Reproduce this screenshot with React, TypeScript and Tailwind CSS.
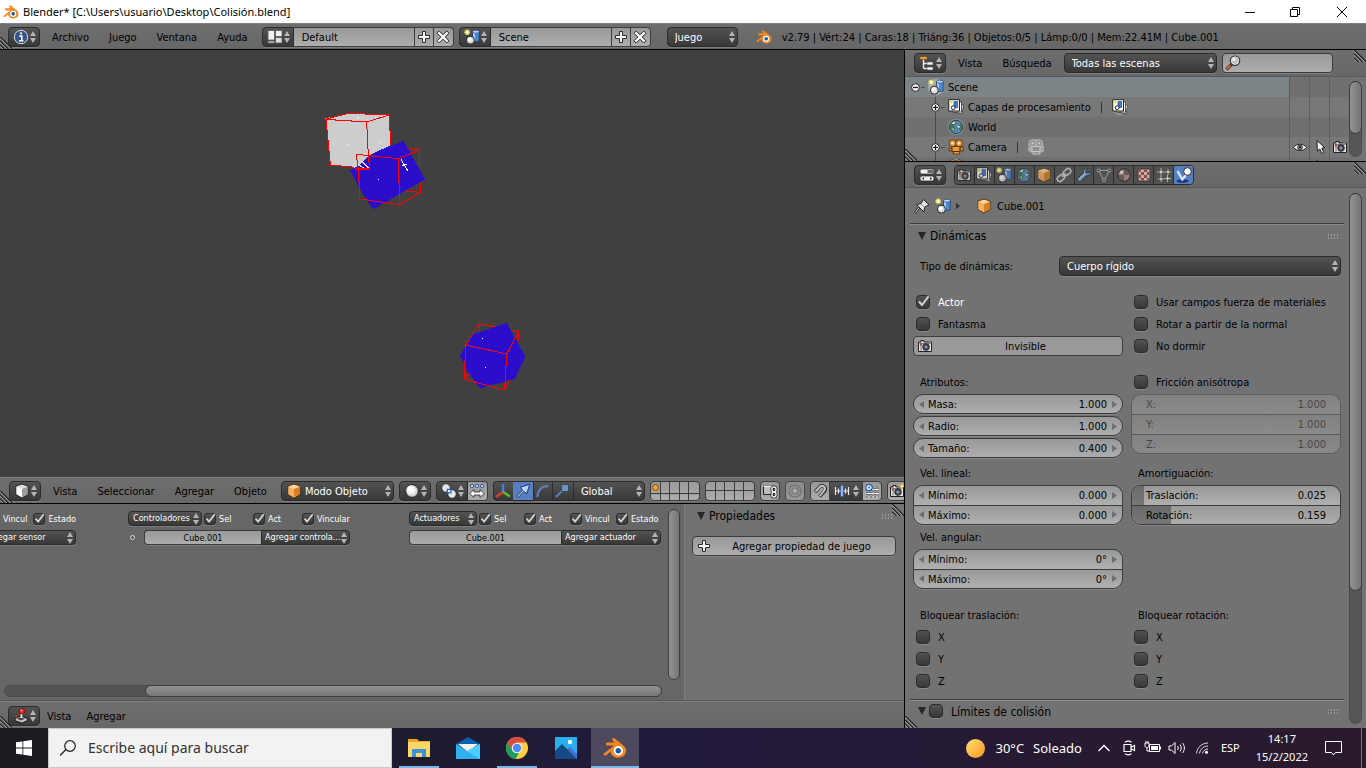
import React from 'react'

type IconProps = { children: React.ReactNode; className?: string; box?: string }

const Icon = ({ children, className = 'w-4 h-4', box = '0 0 16 16' }: IconProps) => (
  <svg viewBox={box} className={`${className} shrink-0`} fill="none" aria-hidden="true">{children}</svg>
)

// shared surfaces
const dark = 'bg-linear-to-b from-[#535353] to-[#383838] border border-[#2b2b2b] text-white shadow-[0_1px_0_#ffffff26]'
const light = 'bg-linear-to-b from-[#999999] to-[#adadad] border border-[#3c3c3c] text-black shadow-[0_1px_0_#ffffff26]'
const bar = 'bg-linear-to-b from-[#6e6e6e] to-[#676767]'

/* ---------- icons ---------- */

const BlenderLogo = ({ className }: { className?: string }) => (
  <Icon className={className} box="0 0 24 24">
    <path d="M1 17.5 11 9.6H4.4a1.6 1.6 0 0 1 0-3.2h7.4L9.6 4.6a1.5 1.5 0 0 1 1.9-2.3l8.9 7.1c2 1.7 3 3.7 2.7 6.2-.5 3.700-3.800 6.100-7.800 6.100-4.300 0-7.600-2.600-7.800-6.300L3.400 19.200c-1.600 1.200-3.800-.4-2.400-1.700z" fill="#f5861f" />
    <circle cx="15.3" cy="14.8" r="4.7" fill="#fff" />
    <circle cx="15.3" cy="14.8" r="2.7" fill="#1d5796" />
  </Icon>
)

const InfoIcon = () => (
  <Icon>
    <circle cx="8" cy="8" r="6.7" fill="#3b5488" stroke="#d5dbe6" />
    <path d="M6.2 7h2.6v4.5M6 11.8h4.4" stroke="#fff" strokeWidth="1.6" />
    <circle cx="8" cy="4.3" r="1.1" fill="#fff" />
  </Icon>
)

const LayoutIcon = () => (
  <Icon>
    <path d="M1 1.500h6.500v9.500H1z" fill="#f2f2f2" stroke="#555" strokeWidth=".8" />
    <path d="M8.500 1.500H15v6H8.500z" fill="#f2f2f2" stroke="#555" strokeWidth=".8" />
    <path d="M8.500 8.500H15v5.500H8.500zM1 12h6.500v2H1z" fill="#dedede" stroke="#555" strokeWidth=".8" />
  </Icon>
)

const SceneIcon = () => (
  <Icon>
    <path d="M8.500 2.500v9c1 1.300 5.600 1.300 6.700 0v-9z" fill="#4a86d2" stroke="#16365f" strokeWidth=".7" />
    <path d="M10 4v7.500" stroke="#c8e2ff" strokeWidth="1.500" />
    <ellipse cx="11.900" cy="2.700" rx="3.300" ry="1.500" fill="#b7d6fa" stroke="#16365f" strokeWidth=".6" />
    <circle cx="6.400" cy="11.200" r="4" fill="#d8d8d8" stroke="#222" />
    <circle cx="5.600" cy="10.200" r="2" fill="#fff" />
    <circle cx="3.200" cy="3.200" r="2.500" fill="#f6f29a" stroke="#c2ba3a" strokeWidth=".8" />
    <circle cx="3.200" cy="3.200" r="1" fill="#fff" />
  </Icon>
)

const PlusIcon = () => (
  <Icon><path d="M6.500 2.500h3v4h4v3h-4v4h-3v-4h-4v-3h4z" fill="#f5f5f5" stroke="#2b2b2b" /></Icon>
)

const CrossIcon = () => (
  <Icon>
    <path d="m4.200 2 3.800 3.800L11.800 2 14 4.200 10.200 8l3.800 3.800-2.200 2.200L8 10.200 4.200 14 2 11.800 5.800 8 2 4.200z" fill="#f5f5f5" stroke="#2b2b2b" />
  </Icon>
)

const TreeIcon = () => (
  <Icon>
    <path d="M4.500 4v9.500M4.500 8.500H8M4.500 13.500H8" stroke="#f0f0f0" strokeWidth="1.400" />
    <path d="M1 1.500h7v3H1z" fill="#e8a050" stroke="#6a3c08" strokeWidth=".6" />
    <path d="M8 7h6v3H8zM8 12h6v3H8z" fill="#f4f4f4" stroke="#555" strokeWidth=".6" />
  </Icon>
)

const PropsIcon = () => (
  <Icon>
    <rect x="1" y="2" width="14" height="5" rx="2" fill="#eee" stroke="#222" strokeWidth=".7" />
    <path d="M8.500 3h4.500a1.500 1.500 0 0 1 0 3H8.500z" fill="#666" />
    <rect x="1" y="9" width="14" height="5" rx="2" fill="#eee" stroke="#222" strokeWidth=".7" />
    <path d="m5 10-2 1.500L5 13zM11 10l2 1.500-2 1.500z" fill="#333" />
  </Icon>
)

const LayersIcon = () => (
  <Icon>
    <path d="m6 13 8 2 1.500-9-3-.6z" fill="#ececec" stroke="#333" strokeWidth=".8" />
    <path d="M4 13h9.500V3h-2z" fill="#fff" stroke="#333" strokeWidth=".8" />
    <path d="M.7.700h10.800v11.300H.7z" fill="#f8f8f8" stroke="#222" />
    <path d="M6 2.500h3.500v6H6z" fill="#3f79c9" stroke="#1d3d6b" strokeWidth=".6" />
    <circle cx="5.200" cy="8.700" r="1.900" fill="#fff" stroke="#111" strokeWidth=".9" />
    <circle cx="3.300" cy="3.300" r="1.300" fill="#e8dc35" />
  </Icon>
)

const WorldIcon = () => (
  <Icon>
    <circle cx="8" cy="8" r="6.800" fill="#5a86bb" stroke="#243648" strokeWidth=".9" />
    <path d="M2 6.500C3.500 3 6 1.700 8.500 1.800L8.700 4.500 5.500 6.500 7.500 9l-1.300 4.500C3.500 12 2 9.500 2 6.500zM10 6l3.500-1.500c1.200 2.500.8 5.500-.9 7.300L10 9.500z" fill="#43704d" />
    <path d="M3.500 4.800C4.500 3.500 6 2.600 7.500 2.500L6.500 4.900zM9 6.500l3 .8-1 2.200zM4 9l2 1-.5 2z" fill="#e4eef0" />
  </Icon>
)

const MovieCamIcon = ({ ghost = false }: { ghost?: boolean }) => (
  <Icon>
    <g fill={ghost ? '#8f8f8f' : '#e79a3f'} stroke={ghost ? '#c9c9c9' : '#4d2a05'} strokeWidth=".8">
      <circle cx="4.600" cy="4.200" r="3.500" />
      <circle cx="11" cy="4.200" r="3.500" />
      <path d="M4 7.500h8v5H4zM12 9l3-1.500v5L12 11zM1 9l3 .5v2L1 12zM6 12.500h5l1 2.500H5z" />
    </g>
    <g fill={ghost ? '#c9c9c9' : '#fbe3c0'}>
      <circle cx="4.600" cy="4.200" r="1.200" /><circle cx="11" cy="4.200" r="1.200" />
    </g>
  </Icon>
)

const EyeIcon = () => (
  <Icon>
    <path d="M1.500 8.500C4 4.500 11.500 4 14.500 8.500 11.500 12.500 5 12.500 1.500 8.500z" fill="#f4f4f4" stroke="#222" />
    <circle cx="8" cy="8.300" r="2.500" fill="#777" stroke="#222" strokeWidth=".6" /><circle cx="8" cy="8.300" r="1" fill="#111" />
  </Icon>
)

const CursorIcon = () => (
  <Icon><path d="m5 1.500.3 10.500 2.500-2 2 4.500 2-1-2-4.300 3-.5z" fill="#f4f4f4" stroke="#111" strokeWidth=".9" /></Icon>
)

const PhotoIcon = ({ star = false }: { star?: boolean }) => (
  <Icon>
    <path d="M1.500 4h2.300V2.500h3V4h7.700v9.500h-13z" fill="#e2e2e2" stroke="#222" />
    <path d="M4 3.500v9.500M2.500 5.500h11" stroke="#555" strokeWidth=".7" />
    <circle cx="9" cy="9" r="3.400" fill="#444" stroke="#222" strokeWidth=".7" />
    <circle cx="9" cy="9" r="1.600" fill="#7b98bd" /><circle cx="4" cy="6.700" r="1" fill="#d22" />
    {star ? <path d="m13 0 1 2.500 2 .7-2 1-1 2.300-1-2.300-2.500-1 2.500-.7z" fill="#ffe15a" /> : <path d="M11 3.500h2.500v1.500H11z" fill="#888" />}
  </Icon>
)

const CubeIcon = ({ gray = false }: { gray?: boolean }) => (
  <Icon>
    <path d="m8 1 6 2v8.500L8 15l-6-3.500V3z" fill={gray ? '#ddd' : '#f8d4a0'} stroke={gray ? '#222' : '#5d3205'} />
    <path d="M2.500 3.700 8 6v8.300l-5.500-3.100z" fill={gray ? '#fff' : '#f3b063'} />
    <path d="M13.500 3.700 8 6v8.300l5.500-3.100z" fill={gray ? '#9a9a9a' : '#d67f22'} />
  </Icon>
)

const LinkIcon = () => (
  <Icon>
    <g stroke="#d0d0d0" strokeWidth="1.600">
      <rect x="7" y="2.600" width="8" height="5" rx="2.500" transform="rotate(-40 11 5)" />
      <rect x="1" y="8.400" width="8" height="5" rx="2.500" transform="rotate(-40 5 11)" />
      <path d="m6 9.800 4-3.500" />
    </g>
  </Icon>
)

const WrenchIcon = () => (
  <Icon>
    <path d="M15 4.200c.6 3-2 5.200-4.800 4.500L5 14c-1.800 1.700-4.700-.8-3.200-2.900L7.300 6C6.800 3 9 .6 12 1.200L9.800 3.700l.5 2 2 .5z" fill="#86a9d8" stroke="#182840" />
    <path d="m3.300 12.300 5.500-5.200" stroke="#cfe0f7" />
  </Icon>
)

const MeshIcon = () => (
  <Icon>
    <path d="M2.500 3.500h11L8 13.500z" stroke="#b9b9b9" />
    <g fill="#333" stroke="#ddd" strokeWidth=".8"><circle cx="2.700" cy="3.500" r="1.500" /><circle cx="13.300" cy="3.500" r="1.500" /><circle cx="8" cy="13" r="1.500" /></g>
  </Icon>
)

const MaterialIcon = () => (
  <Icon>
    <circle cx="8" cy="8" r="6.300" fill="#6f5a5a" stroke="#222" />
    <path d="M2.300 8A5.800 5.800 0 0 1 8 2.200V8zM8 8h5.700A5.800 5.800 0 0 1 8 13.700z" fill="#b58d89" />
    <circle cx="5.600" cy="5.300" r="1.600" fill="#eee" />
  </Icon>
)

const TextureIcon = () => (
  <Icon>
    <path d="M2 2h12v12H2z" fill="#ead2cd" stroke="#333" />
    <path d="M2.500 2.500H5V5H2.500zM8 2.500h3V5H8zM5 5h3v3H5zM11 5h2.500v3H11zM2.500 8H5v3H2.500zM8 8h3v3H8zM5 11h3v2.500H5zM11 11h2.500v2.500H11z" fill="#a8473b" />
  </Icon>
)

const ParticlesIcon = () => (
  <Icon>
    <path d="M5 1v8M1 5h8M12 2v6M9 5h6M5 9v6M2 12h6M11.500 8v7M8 11.500h7" stroke="#d8cda8" />
    <g fill="#fff"><circle cx="5" cy="5" r="1.200" /><circle cx="12" cy="5" r="1" /><circle cx="5" cy="12" r="1" /><circle cx="11.500" cy="11.500" r="1.200" /></g>
  </Icon>
)

const PhysicsIcon = () => (
  <Icon>
    <ellipse cx="6.500" cy="14" rx="6" ry="1.800" fill="#173a75" />
    <path d="m1.500 4 4.800 8.500L10 8" stroke="#dceaff" strokeWidth="2.200" />
    <circle cx="11.500" cy="4.500" r="3.800" fill="#fff" stroke="#222" strokeWidth=".9" />
  </Icon>
)

const PinIcon = () => (
  <Icon>
    <path d="m1 15 4.500-6" stroke="#222" strokeWidth="2.200" /><path d="m1.500 14.500 4-5.500" stroke="#ddd" />
    <path d="m2.500 6.500 4.500-.8 2.500-4.200 5.500 5.200-4.500 2.500-.5 4.800z" fill="#e4e4e4" stroke="#222" /><path d="m7.500 6.500 3 3" stroke="#888" />
  </Icon>
)

const SphereIcon = () => (
  <Icon><circle cx="8" cy="8" r="6.300" fill="#d5d5d5" stroke="#222" /><circle cx="7" cy="7" r="4.500" fill="#f3f3f3" /><circle cx="6" cy="6" r="2.200" fill="#fff" /></Icon>
)

const PivotIcon = () => (
  <Icon>
    <circle cx="5" cy="5" r="4.200" fill="#e8e8e8" stroke="#222" strokeWidth=".8" /><circle cx="11" cy="11" r="4.200" fill="#e8e8e8" stroke="#222" strokeWidth=".8" />
    <path d="M6.300 6.300h3.500v3.500H6.300z" fill="#fff" stroke="#2264d6" strokeWidth="1.300" />
  </Icon>
)

const PivotPointsIcon = () => (
  <Icon>
    <g fill="#dcebff" stroke="#1e4b94" strokeWidth=".9"><circle cx="3" cy="3" r="1.600" /><circle cx="8" cy="3" r="1.600" /><circle cx="13" cy="3" r="1.600" /></g>
    <path d="m.8 10.500 4.200-4V9h6V6.500l4.200 4-4.200 4V12H5v2.500z" fill="#fff" stroke="#222" strokeWidth=".8" />
  </Icon>
)

const AxisIcon = () => (
  <Icon>
    <path d="M8 9V1" stroke="#3d80e8" strokeWidth="2.400" /><path d="m8 9-7 5" stroke="#e03a2a" strokeWidth="2.600" /><path d="m8 9 7 4.500" stroke="#58bb37" strokeWidth="2.600" />
  </Icon>
)

const ArrowIcon = () => (
  <Icon><path d="m1.500 13.300 6.300-6.200L5 4.400 14.800 1.200 11.600 11 9 8.300l-6 6.300z" fill="#b9d4fb" stroke="#142d55" strokeWidth=".9" /></Icon>
)

const ArcIcon = () => <Icon><path d="M2.500 14C2.500 7 7 3 13.500 3" stroke="#5c7faf" strokeWidth="2.400" /></Icon>

const ScaleIcon = () => (
  <Icon><path d="m2 14 8-8" stroke="#5c7faf" strokeWidth="2" /><path d="M7.500 1.500h7v7h-7z" fill="#7293bd" stroke="#24364f" strokeWidth=".7" /></Icon>
)

const LockLayersIcon = () => (
  <Icon>
    <path d="M1.500 2.500h10v9h-10z" fill="#bdbdbd" stroke="#222" /><path d="M1.500 2.500h10V4h-10z" fill="#eee" />
    <g stroke="#222" strokeWidth="3"><rect x="10" y="4" width="4" height="5" rx="2" /><rect x="10" y="9" width="4" height="5" rx="2" /></g>
    <g stroke="#f0f0f0" strokeWidth="1.400"><rect x="10" y="4" width="4" height="5" rx="2" /><rect x="10" y="9" width="4" height="5" rx="2" /></g>
  </Icon>
)

const RingIcon = () => (
  <Icon><circle cx="8" cy="8" r="6" stroke="#777" strokeWidth="1.200" /><circle cx="8" cy="8" r="3" fill="#c4c4c4" stroke="#777" strokeWidth="1.200" /></Icon>
)

const MagnetIcon = () => (
  <Icon>
    <path d="m3 9 5-5.500c3-2.500 7 1 4.500 4.500L7.500 13.500" stroke="#333" strokeWidth="3.600" />
    <path d="m3.400 8.600 4.800-5c2.700-2.200 6 .8 4 3.900L7.800 13" stroke="#c4c4c4" strokeWidth="2" />
  </Icon>
)

const IncrementIcon = () => (
  <Icon>
    <path d="M1.500 4v8M14.500 4v8M1 8h14M4.500 5.500v5M11.500 5.500v5" stroke="#e6e6e6" strokeWidth="1.200" /><path d="M6.800 2.500h2.400v11H6.800z" fill="#a9caff" stroke="#2e62b5" strokeWidth=".7" />
  </Icon>
)

const SnapGridIcon = () => (
  <Icon>
    <path d="M5 3v12M9 3v12M13 3v12M2 6.500h13M2 10.500h13M2 14h13" stroke="#222" strokeWidth="2" />
    <path d="M5 3v12M9 3v12M13 3v12M2 6.500h13M2 10.500h13M2 14h13" stroke="#f0f0f0" />
    <circle cx="5" cy="4.500" r="3.200" fill="#dfecff" stroke="#2a5caa" strokeWidth="1.200" /><circle cx="5" cy="4.500" r="1" fill="#2a5caa" />
  </Icon>
)

const JoystickIcon = () => (
  <Icon>
    <path d="m2 10.500 6-2.500 6.500 2.500v2L9 15.200l-7-2.500z" fill="#c4c4c4" stroke="#111" /><path d="m4 10.800 4-1.600 4 1.600-4 1.700z" fill="#444" />
    <path d="M8.500 10V4" stroke="#eee" strokeWidth="1.800" /><circle cx="9" cy="3.200" r="2.800" fill="#e52a20" stroke="#600" strokeWidth=".6" /><circle cx="8.200" cy="2.400" r=".8" fill="#fbb" />
    <circle cx="3.500" cy="8.500" r="1.200" fill="#e52a20" />
  </Icon>
)

const MagnifierIcon = () => (
  <Icon>
    <path d="m1.500 14.500 5-5" stroke="#5e2d14" strokeWidth="3.200" /><path d="m2 14 3.500-3.500" stroke="#d98a5a" strokeWidth="1.500" />
    <circle cx="10" cy="5.700" r="4.700" fill="#bdbdbd" stroke="#333" strokeWidth="1.200" /><circle cx="10" cy="5.700" r="3.700" stroke="#eee" strokeWidth=".8" /><circle cx="9" cy="4.700" r="1.600" fill="#f4f4f4" />
  </Icon>
)

const UpDown = ({ className = '' }: { className?: string }) => (
  <Icon className={`w-[6px] h-3 pointer-events-none ${className}`} box="0 0 6 12"><path d="m3 0 3 5H0zM3 12 0 7h6z" fill="#b4b4b4" /></Icon>
)

/* ---------- widgets ---------- */

const EditorType = ({ label, children }: { label: string; children: React.ReactNode }) => (
  <button aria-label={label} className={`${dark} w-8 h-5 rounded-[4px] flex items-center justify-between pl-1 pr-[3px] shrink-0`}>
    {children}<UpDown />
  </button>
)

const Menus = ({ items, className = 'gap-5 mx-3' }: { items: string[]; className?: string }) => (
  <nav className={`flex pt-0.5 shrink-0 ${className}`}>
    {items.map(item => <button key={item}>{item}</button>)}
  </nav>
)

type DropdownProps = { label: string; value: string; className: string; pad?: string; icon?: React.ReactNode; radius?: string }

const Dropdown = ({ label, value, className, pad = 'pl-[7px] pt-0.5', icon, radius = 'rounded-[4px]' }: DropdownProps) => (
  <div className={`relative shrink-0 ${className}`}>
    <select aria-label={label} className={`${dark} ${pad} ${radius} appearance-none w-full h-full block`}>
      <option>{value}</option>
    </select>
    {icon && <span className="absolute left-[5px] top-0.5 pointer-events-none">{icon}</span>}
    <UpDown className="absolute right-[3px] top-1/2 -translate-y-1/2" />
  </div>
)

const DataBlock = ({ label, value, children }: { label: string; value: string; children: React.ReactNode }) => (
  <div className="flex h-5 w-[192px] shrink-0">
    <button aria-label={label} className={`${dark} w-8 rounded-l-[4px] flex items-center justify-between pl-1 pr-[3px]`}>{children}<UpDown /></button>
    <input aria-label={`${label} nombre`} defaultValue={value} className={`${light} flex-1 min-w-0 border-x-0 px-2 pt-0.5`} />
    <button aria-label={`Agregar ${label}`} className={`${light} w-5 pl-px`}><PlusIcon /></button>
    <button aria-label={`Quitar ${label}`} className={`${light} w-5 pl-px border-l-0 rounded-r-[4px]`}><CrossIcon /></button>
  </div>
)

type CheckProps = { label: string; checked?: boolean; small?: boolean; className?: string }

const Check = ({ label, checked = false, small = false, className = '' }: CheckProps) => (
  <label className={`flex items-center ${small ? 'gap-[3px] h-[15px]' : 'gap-2 h-5 pl-[3px]'} ${checked ? 'text-white' : ''} ${className}`}>
    <span className={`relative ${small ? 'size-3' : 'size-[14px]'}`}>
      <input type="checkbox" defaultChecked={checked} className={`${dark} peer appearance-none block size-full ${small ? 'rounded-[3px]' : 'rounded-[4px]'}`} />
      <svg viewBox="0 0 14 14" className="absolute inset-0 hidden peer-checked:block pointer-events-none" fill="none">
        <path d="m3 6.500 3 3.500L12.500 1.500" stroke="#d6d6d6" strokeWidth="2" />
      </svg>
    </span>
    <span className={small ? '' : 'pt-0.5'}>{label}</span>
  </label>
)

const Arrow = ({ flip = false }: { flip?: boolean }) => (
  <Icon className={`w-[5px] h-[7px] ${flip ? 'rotate-180' : ''}`} box="0 0 5 7"><path d="M5 0v7L0 3.500z" fill="#6f6f6f" /></Icon>
)

const NumberField = ({ label, value }: { label: string; value: string }) => (
  <label className="flex items-center h-full px-[5px] gap-1">
    <Arrow /><span className="pt-0.5">{label}:</span>
    <input defaultValue={value} className="flex-1 min-w-0 text-right pt-0.5 pr-px" /><Arrow flip />
  </label>
)

const SliderField = ({ label, value, disabled = false }: { label: string; value: string; disabled?: boolean }) => (
  <label className="relative flex items-center h-5 px-[14px] not-last:border-b border-[#3c3c3c] bg-linear-to-b from-[#999999] to-[#b0b0b0]">
    {!disabled && <span className="absolute inset-y-0 left-0 bg-linear-to-b from-[#6a6a6a] to-[#787878]" style={{ width: 7 + 200 * Number(value) }} />}
    <span className="relative">{label}:</span>
    <input defaultValue={value} disabled={disabled} className="relative flex-1 min-w-0 text-right" />
  </label>
)

const FieldPair = ({ rows }: { rows: string[][] }) => (
  <div className="rounded-[10px] border border-[#3c3c3c] h-10 overflow-hidden flex flex-col shadow-[0_1px_0_#ffffff26]">
    {rows.map(([label, value]) => (
      <div key={label} className="flex-1 min-h-0 not-last:border-b border-[#3c3c3c] bg-linear-to-b from-[#999999] to-[#b0b0b0]"><NumberField label={label} value={value} /></div>
    ))}
  </div>
)

const Caption = ({ children }: { children: React.ReactNode }) => <div className="h-5 leading-[22px] pl-[7px]">{children}</div>

const Grip = () => (
  <Icon className="w-[11px] h-[5px]" box="0 0 11 5"><path d="M0 1h11M0 4h11" stroke="#c0c0c0" strokeDasharray="1 2" /></Icon>
)

const Collapse = () => <Icon className="w-2 h-2" box="0 0 8 8"><path d="M0 0h8L4 8z" fill="#262626" /></Icon>

const Corner = ({ className }: { className: string }) => (
  <Icon className={`w-3 h-3 absolute pointer-events-none ${className}`} box="0 0 12 12">
    <path d="m0 0 12 12M0 4l8 8M0 8l4 4" stroke="#222" strokeWidth="1.600" /><path d="m0 1 11 11M0 5l7 7M0 9l3 3" stroke="#b5b5b5" strokeWidth=".8" />
  </Icon>
)

/* ---------- areas ---------- */

const TitleBar = () => (
  <header className="h-[23px] bg-white text-black flex items-center pl-[3px] shrink-0 font-['Noto_Sans','Open_Sans',sans-serif]">
    <BlenderLogo className="w-4 h-4" />
    <h1 className="ml-1 flex-1">Blender* [C:\Users\usuario\Desktop\Colisión.blend]</h1>
    <button aria-label="Minimizar" className="w-[45px] flex justify-center"><Icon className="w-[10px] h-[10px]" box="0 0 10 10"><path d="M0 5.500h10" stroke="#000" /></Icon></button>
    <button aria-label="Restaurar" className="w-[45px] flex justify-center"><Icon className="w-[10px] h-[10px]" box="0 0 10 10"><path d="M.5 2.500h7v7h-7zM2.500 2.500v-2h7v7h-2" stroke="#000" /></Icon></button>
    <button aria-label="Cerrar" className="w-[49px] flex justify-center"><Icon className="w-[10px] h-[10px]" box="0 0 10 10"><path d="m0 0 10 10M10 0 0 10" stroke="#000" /></Icon></button>
  </header>
)

const InfoHeader = () => (
  <div className={`${bar} relative h-[27px] border-t border-t-[#808080] border-b border-b-black flex items-center pl-2 pt-px shrink-0 overflow-hidden`}>
    <Corner className="left-0 bottom-0" />
    <EditorType label="Editor de información"><InfoIcon /></EditorType>
    <Menus items={['Archivo', 'Juego', 'Ventana', 'Ayuda']} className="gap-5 ml-3 mr-[14px]" />
    <DataBlock label="Pantalla" value="Default"><LayoutIcon /></DataBlock>
    <div className="w-[5px]" />
    <DataBlock label="Escena" value="Scene"><SceneIcon /></DataBlock>
    <Dropdown label="Motor" value="Juego" className="w-[71px] h-5 ml-4 mr-[18px]" />
    <BlenderLogo className="w-4 h-4" />
    <span className="ml-[10px] pt-0.5 whitespace-nowrap">v2.79 | Vért:24 | Caras:18 | Triáng:36 | Objetos:0/5 | Lámp:0/0 | Mem:22.41M | Cube.001</span>
  </div>
)

const Viewport = () => (
  <div className="relative flex-1 min-h-0 bg-[#404040] overflow-hidden">
    <svg viewBox="0 0 904 427" className="absolute left-0 top-0 w-[904px] h-[427px]" fill="none" shapeRendering="crispEdges">
      <g transform="translate(300 50) scale(.3333)" stroke="#f00" strokeWidth="3.100">
        <path d="m76 55 69-15 123 5 4 90-32 20-32 45-43 2-74-8z" fill="#cdcdcd" stroke="none" />
        <path d="M76 58 145 40l123 5-68 21zM78 58l13 137 74 7M200 66l7 140M268 45l4 90" />
        <path d="m150 212 22-12 36-33 32-17 70-27 14 22 51 93-153 89-12-9z" fill="#2a0ecb" stroke="none" />
        <path d="m172 192 24 16M186 184l22 22M160 200l12 10" stroke="#ddd" />
        <path d="m169 163 126 13 63-26-38-5M169 163l6 47 5 87 119 17 62-37-45-4M295 176l4 138M358 150v58M361 250v27M206 165l2 42h-43" />
        <path d="m303 178 20 34M306 198l14-6" stroke="#fff" />
        <path d="m480 765 40-63 100-33 25 43 31 58-31 67-105 28-40-55z" fill="#2a0ecb" stroke="none" />
        <path d="m585 681-46-10-42 64 123 27 36-67-23-5M539 671l-1 25M497 735l-4 103 121 32 13-28M620 762l-6 108M656 695v27M493 838l15-20" />
        <path d="M545 715h3M555 802h3M172 52h5M141 133h3M237 127h3M234 238h3" stroke="#fff" />
      </g>
    </svg>
  </div>
)

const Layers = ({ active = false }: { active?: boolean }) => (
  <div className={`${light} grid grid-cols-5 w-[50px] h-5 rounded-[4px] shrink-0 overflow-hidden`}>
    {Array.from({ length: 10 }, (_, i) => (
      <button key={i} aria-label={`Capa ${i + 1}`} className="border-[#3c3c3c] not-nth-[5n]:border-r nth-[n+6]:border-t flex items-center justify-center">
        {active && i === 0 && <i className="size-[5px] rounded-full bg-[#ff9d33] outline-1 outline-[#8a4a10]" />}
      </button>
    ))}
  </div>
)

const ViewportHeader = () => (
  <div className={`${bar} relative h-[27px] border-t border-t-[#808080] border-b border-b-black flex items-center pl-[9px] shrink-0 overflow-hidden`}>
    <Corner className="left-0 bottom-0" />
    <EditorType label="Vista 3D"><CubeIcon gray /></EditorType>
    <Menus items={['Vista', 'Seleccionar', 'Agregar', 'Objeto']} className="gap-5 ml-3 mr-[14px]" />
    <div className="flex gap-[5px]">
      <Dropdown label="Modo" value="Modo Objeto" className="w-[113px] h-5" pad="pl-[23px] pt-0.5" icon={<CubeIcon />} />
      <EditorType label="Sombreado"><SphereIcon /></EditorType>
      <div className="flex h-5 w-[52px] shrink-0">
        <button aria-label="Pivote" className={`${dark} w-8 rounded-l-[4px] flex items-center justify-between pl-1 pr-[3px]`}><PivotIcon /><UpDown /></button>
        <button aria-label="Manipular centros" className={`${light} w-5 border-l-0 rounded-r-[4px] pl-px`}><PivotPointsIcon /></button>
      </div>
      <div className="flex h-5 w-[152px] shrink-0">
        <button aria-label="Ejes" className={`${dark} w-5 border-r-0 rounded-l-[4px] pl-px`}><AxisIcon /></button>
        <button aria-label="Trasladar" className="w-5 pl-0.5 border-y border-[#2b2b2b] bg-[#5680c2]"><ArrowIcon /></button>
        <button aria-label="Rotar" className={`${dark} w-5 pl-px`}><ArcIcon /></button>
        <button aria-label="Escalar" className={`${dark} w-5 pl-px border-x-0`}><ScaleIcon /></button>
        <Dropdown label="Orientación" value="Global" className="w-[72px]" radius="rounded-r-[4px]" />
      </div>
      <Layers active />
      <Layers />
      <button aria-label="Bloquear capas" className={`${light} w-5 h-5 rounded-[4px] pl-px shrink-0`}><LockLayersIcon /></button>
      <button aria-label="Edición proporcional" className={`${light} w-5 h-5 rounded-[4px] pl-px shrink-0 opacity-70`}><RingIcon /></button>
      <div className="flex h-5 w-[72px] shrink-0">
        <button aria-label="Adherir" className={`${light} w-5 rounded-l-[4px] pl-px`}><MagnetIcon /></button>
        <button aria-label="Elemento de adherencia" className={`${dark} flex-1 border-x-0 flex items-center justify-between pl-1 pr-[3px]`}><IncrementIcon /><UpDown /></button>
        <button aria-label="Adherir a la cuadrícula" className={`${light} w-5 rounded-r-[4px] pl-px`}><SnapGridIcon /></button>
      </div>
      <button aria-label="Procesar" className={`${light} w-5 h-5 rounded-[4px] pl-px shrink-0`}><PhotoIcon star /></button>
    </div>
  </div>
)

const smallField = `${light} h-[15px] min-w-0 flex-1 rounded-l-[4px] border-r-0 text-center leading-[13px]`

const LogicEditor = () => (
  <div className="flex-1 min-w-0 flex flex-col bg-[#666666] border-r border-[#7e7e7e] overflow-hidden pb-[3px]">
    <div className="flex flex-1 min-h-0 pt-[5px] pr-1 gap-[7px]">
      <div className="flex-1 min-w-0 flex pt-0.5 text-[9px] text-white overflow-hidden">
        <div className="w-[76px] flex flex-col items-end gap-1 mr-[52px] shrink-0">
          <div className="flex">
            <label className="mr-1.5 h-[15px] leading-4">Vincul</label>
            <Check small checked label="Estado" />
          </div>
          <Dropdown label="Agregar sensor" value="Agregar sensor" className="w-[97px] h-[15px]" pad="pl-1 leading-[13px]" />
        </div>
        <div className="w-[222px] flex flex-col gap-1 mr-[59px] shrink-0">
          <div className="flex">
            <Dropdown label="Controladores" value="Controladores" className="w-[74px] h-[15px] mr-0.5" pad="pl-1 leading-[13px]" />
            <Check small checked label="Sel" className="w-[49px]" />
            <Check small checked label="Act" className="w-[49px]" />
            <Check small checked label="Vincular" />
          </div>
          <div className="flex items-center">
            <i className="size-[5px] rounded-full bg-[#555] border border-[#ddd] ml-0.5 mr-[9px]" />
            <input aria-label="Controlador" defaultValue="Cube.001" className={smallField} />
            <Dropdown label="Agregar controlador" value="Agregar controla..." className="w-[89px] h-[15px]" pad="pl-[3px] leading-[13px]" radius="rounded-r-[4px]" />
          </div>
        </div>
        <div className="flex-1 min-w-0 flex flex-col gap-1">
          <div className="flex">
            <Dropdown label="Actuadores" value="Actuadores" className="w-[68px] h-[15px] mr-0.5" pad="pl-1 leading-[13px]" />
            <Check small checked label="Sel" className="w-[45px]" />
            <Check small checked label="Act" className="w-[46px]" />
            <Check small checked label="Vincul" className="w-[46px]" />
            <Check small checked label="Estado" />
          </div>
          <div className="flex">
            <input aria-label="Actuador" defaultValue="Cube.001" className={smallField} />
            <Dropdown label="Agregar actuador" value="Agregar actuador" className="w-[100px] h-[15px]" pad="pl-[3px] leading-[13px]" radius="rounded-r-[4px]" />
          </div>
        </div>
      </div>
      <div className="w-3 mb-[5px] rounded-full border border-[#3e3e3e] bg-linear-to-r from-[#939393] to-[#757575]" />
    </div>
    <div className="h-3 ml-1 mr-[22px] rounded-full border border-[#4c4c4c] bg-[#545454] flex justify-end">
      <div className="w-[517px] -m-px rounded-full border border-[#3e3e3e] bg-linear-to-b from-[#929292] to-[#767676]" />
    </div>
  </div>
)

const GameProperties = () => (
  <div className="relative w-[219px] shrink-0 bg-[#727272] pl-[7px] pr-2 pt-1">
    <Corner className="right-0 top-0" />
    <div className="flex items-center h-4 pl-[5px] pr-[3px] text-[12px]">
      <Collapse /><h2 className="ml-1 flex-1">Propiedades</h2><Grip />
    </div>
    <button className={`${light} w-full h-5 rounded-[4px] mt-3 flex items-center pl-[3px] pr-1`}>
      <PlusIcon /><span className="flex-1 text-center pt-0.5">Agregar propiedad de juego</span>
    </button>
  </div>
)

const treeRows = [
  { name: 'Scene', icon: <SceneIcon />, sign: '-', indent: 'pl-[5px]', bg: 'bg-[#7d8488]' },
  { name: 'Capas de procesamiento', icon: <LayersIcon />, sign: '+', indent: 'pl-[25px]', bg: 'bg-[#787878]', extra: <LayersIcon /> },
  { name: 'World', icon: <WorldIcon />, sign: '', indent: 'pl-[25px]', bg: 'bg-[#707070]' },
  { name: 'Camera', icon: <MovieCamIcon />, sign: '+', indent: 'pl-[25px]', bg: 'bg-[#787878]', extra: <MovieCamIcon ghost />, toggles: true },
  { name: '', icon: <MovieCamIcon />, sign: '', indent: 'pl-[25px]', bg: 'bg-[#707070]', toggles: true },
]

const Outliner = () => (
  <section className="relative h-[112px] shrink-0 border-b border-black flex flex-col overflow-hidden bg-[#727272]">
    <div className={`${bar} h-[27px] flex items-center pl-[9px] shrink-0 border-b border-[#585858]`}>
      <EditorType label="Organizador"><TreeIcon /></EditorType>
      <Menus items={['Vista', 'Búsqueda']} />
      <Dropdown label="Mostrar" value="Todas las escenas" className="w-[153px] h-5" />
      <label className={`${light} ml-[5px] w-[111px] h-5 rounded-[4px] flex items-center pl-0.5`}>
        <MagnifierIcon /><input aria-label="Buscar" className="flex-1 min-w-0" />
      </label>
    </div>
    <div className="flex flex-1 min-h-0">
      <ul className="flex-1 min-w-0">
        {treeRows.map((row, n) => (
          <li key={n} className="relative flex h-5">
            {n > 0 && <i className="absolute left-[30px] inset-y-0 w-px bg-[#4a4a4a]" />}
            <div className={`flex-1 flex items-center gap-[3px] ${row.bg} ${row.indent}`}>
              <span className="w-[15px] relative flex items-center">
                {row.sign && (
                  <>
                    <Icon className="w-[11px] h-[11px]" box="0 0 11 11">
                      <circle cx="5.500" cy="5.500" r="3.900" fill="#f2f2f2" stroke="#222" />
                      <path d={row.sign === '+' ? 'M3 5.500h5M5.500 3v5' : 'M3 5.500h5'} stroke="#111" strokeWidth="1.200" />
                    </Icon>
                    <i className="flex-1 h-px bg-[#4a4a4a]" />
                  </>
                )}
              </span>
              <span className={n % 2 === 0 ? 'rounded-full bg-[#ffffff50]' : ''}>{row.icon}</span>
              <span className="pl-px pt-0.5">{row.name}</span>
              {row.extra && <><span className="mx-[7px] w-px h-[11px] bg-[#333]" /><span className="rounded-full bg-[#ffffff40]">{row.extra}</span></>}
            </div>
            {[<EyeIcon key="e" />, <CursorIcon key="c" />, <PhotoIcon key="p" />].map((icon, i) => (
              <span key={i} className={`w-5 flex items-center justify-center border-l border-[#5e5e5e] ${row.bg === 'bg-[#787878]' ? 'bg-[#787878]' : 'bg-[#707070]'}`}>{row.toggles && icon}</span>
            ))}
          </li>
        ))}
      </ul>
      <div className="w-[13px] mt-1 mb-1 mr-1 rounded-full border border-[#4c4c4c] bg-[#565656]">
        <div className="h-[53px] -m-px rounded-full border border-[#3e3e3e] bg-linear-to-r from-[#939393] to-[#757575]" />
      </div>
    </div>
    <Corner className="right-0 top-0" />
    <Corner className="left-0 bottom-0" />
  </section>
)

const tabs = [
  { name: 'Procesar', icon: <PhotoIcon /> },
  { name: 'Capas', icon: <LayersIcon /> },
  { name: 'Escena', icon: <SceneIcon /> },
  { name: 'Entorno', icon: <WorldIcon /> },
  { name: 'Objeto', icon: <CubeIcon /> },
  { name: 'Restricciones', icon: <LinkIcon /> },
  { name: 'Modificadores', icon: <WrenchIcon /> },
  { name: 'Datos', icon: <MeshIcon /> },
  { name: 'Material', icon: <MaterialIcon /> },
  { name: 'Textura', icon: <TextureIcon /> },
  { name: 'Partículas', icon: <ParticlesIcon /> },
  { name: 'Física', icon: <PhysicsIcon /> },
]

const Axes = ({ title }: { title: string }) => (
  <fieldset className="flex flex-col gap-0.5">
    <legend className="h-[22px] leading-[22px] pl-[7px]">{title}</legend>
    {['X', 'Y', 'Z'].map(axis => <Check key={axis} label={axis} />)}
  </fieldset>
)

const PropertiesEditor = () => (
  <section className="relative flex-1 min-h-0 flex flex-col bg-[#727272] overflow-hidden">
    <div className={`${bar} h-[26px] flex items-center pl-[9px] gap-2 shrink-0 border-b border-[#585858]`}>
      <EditorType label="Propiedades"><PropsIcon /></EditorType>
      <div className="flex h-5 rounded-[4px] overflow-hidden border border-[#2b2b2b] w-[240px]">
        {tabs.map(tab => (
          <button key={tab.name} aria-label={tab.name} className="flex-1 flex items-center justify-center not-last:border-r border-[#2b2b2b] bg-[#505050] last:bg-[#5680c2]">
            <span className={tab.name === 'Física' ? '' : 'opacity-75'}>{tab.icon}</span>
          </button>
        ))}
      </div>
    </div>
    <div className="flex flex-1 min-h-0">
      <div className="flex-1 min-w-0 pl-[5px] overflow-hidden">
        <div className="h-[35px] flex items-center pl-1">
          <PinIcon /><span className="ml-[5px]"><SceneIcon /></span>
          <Icon className="w-[4px] h-2 ml-[5px] mr-4" box="0 0 5 8"><path d="M0 0v8l5-4z" fill="#333" /></Icon>
          <CubeIcon /><span className="ml-[5px] pt-0.5">Cube.001</span>
        </div>
        <div className="border-t border-[#3d3d3d]"><div className="border-t border-[#8e8e8e]" /></div>
        <div className="flex items-center h-[22px] pl-2 pr-[5px] text-[12px]">
          <Collapse /><h2 className="ml-1 flex-1">Dinámicas</h2><Grip />
        </div>
        <div className="px-[3px] pt-[9px]">
          <label className="flex items-center justify-between pl-[7px] h-5">
            <span className="pt-0.5">Tipo de dinámicas:</span>
            <Dropdown label="Tipo de dinámicas" value="Cuerpo rígido" className="w-[282px] h-5" />
          </label>
          <div className="grid grid-cols-2 gap-x-2 gap-y-0.5 mt-4">
            <Check label="Actor" checked />
            <Check label="Usar campos fuerza de materiales" />
            <Check label="Fantasma" />
            <Check label="Rotar a partir de la normal" />
            <button className="h-5 rounded-[4px] border border-[#3c3c3c] bg-[#999999] flex items-center pl-[3px] pr-1"><PhotoIcon /><span className="flex-1 text-center pt-0.5">Invisible</span></button>
            <Check label="No dormir" />
          </div>
          <div className="grid grid-cols-2 gap-x-2 mt-4">
            <div className="flex flex-col gap-0.5">
              <Caption>Atributos:</Caption>
              {[['Masa', '1.000'], ['Radio', '1.000'], ['Tamaño', '0.400']].map(([label, value]) => (
                <div key={label} className={`${light} h-5 rounded-full`}><NumberField label={label} value={value} /></div>
              ))}
            </div>
            <div className="flex flex-col gap-0.5">
              <Check label="Fricción anisótropa" />
              <div className="rounded-[10px] border border-[#3c3c3c] overflow-hidden h-[60px] opacity-40">
                {['X', 'Y', 'Z'].map(axis => <SliderField key={axis} label={axis} value="1.000" disabled />)}
              </div>
            </div>
          </div>
          <div className="grid grid-cols-2 gap-x-2 mt-[5px]">
            <div className="flex flex-col gap-0.5">
              <Caption>Vel. lineal:</Caption>
              <FieldPair rows={[['Mínimo', '0.000'], ['Máximo', '0.000']]} />
              <Caption>Vel. angular:</Caption>
              <FieldPair rows={[['Mínimo', '0°'], ['Máximo', '0°']]} />
            </div>
            <div className="flex flex-col gap-0.5">
              <Caption>Amortiguación:</Caption>
              <div className="rounded-[10px] border border-[#3c3c3c] overflow-hidden h-10 shadow-[0_1px_0_#ffffff26]">
                <SliderField label="Traslación" value="0.025" />
                <SliderField label="Rotación" value="0.159" />
              </div>
            </div>
          </div>
          <div className="grid grid-cols-2 gap-x-2 mt-4">
            <Axes title="Bloquear traslación:" />
            <Axes title="Bloquear rotación:" />
          </div>
        </div>
        <div className="border-t border-[#3d3d3d] mt-2"><div className="border-t border-[#8e8e8e]" /></div>
        <div className="flex items-center h-5 pl-2 pr-[5px] text-[12px]">
          <Collapse /><Check label="Límites de colisión" className="flex-1" /><Grip />
        </div>
      </div>
      <div className="w-[13px] mt-[5px] mb-1 ml-[5px] mr-1 rounded-full border border-[#4c4c4c] bg-[#565656] shrink-0">
        <div className="h-[398px] -m-px rounded-full border border-[#3e3e3e] bg-linear-to-r from-[#939393] to-[#757575]" />
      </div>
    </div>
    <Corner className="right-0 top-0" />
    <Corner className="left-0 bottom-0" />
  </section>
)

/* ---------- windows taskbar ---------- */

const apps = [
  {
    name: 'Explorador de archivos', open: true,
    icon: <><path d="M1 3h9l2 2h11v16H1z" fill="#e9a91c" /><path d="M1 6h22v15H1z" fill="#ffd767" /><path d="M5 13h14v8h-4v-4H9v4H5z" fill="#3a93dd" /></>,
  },
  {
    name: 'Correo', open: false,
    icon: <><path d="M0 8 12 1l12 7v15H0z" fill="#0f5faf" /><path d="m0 8 12 8L24 8v15H0z" fill="#2fb2ee" /><path d="m2 8 10 8 10-8z" fill="#f1f1f1" /><path d="M24 8v15L11 15z" fill="#47d0fb" /></>,
  },
  {
    name: 'Chrome', open: true,
    icon: <><circle cx="12" cy="12" r="11" fill="#ffcd40" /><path d="M21.500 6.500H12L7 15 2.500 6.500a11 11 0 0 1 19 0z" fill="#dd4b3f" /><path d="M2.500 6.500 7.200 14.700 14 17l-3.500 6A11 11 0 0 1 2.500 6.500z" fill="#1a9e5c" /><circle cx="12" cy="12" r="5.300" fill="#f2f2f2" /><circle cx="12" cy="12" r="4.200" fill="#4b8bf5" /></>,
  },
  {
    name: 'Fotos', open: false,
    icon: <><path d="M1 1h22v22H1z" fill="#29aef0" /><path d="m12 14 4-3 7 7v5z" fill="#4b6fd1" /><path d="m1 15 7-7 15 15H1z" fill="#164a85" /><circle cx="16" cy="6" r="2.200" fill="#fff" /></>,
  },
]

const Taskbar = () => (
  <footer className="h-10 shrink-0 flex bg-linear-to-r from-[#1b1c22] from-5% via-[#221a3c] via-50% to-[#2a1a2c] text-white font-['Noto_Sans','Open_Sans',sans-serif]">
    <button aria-label="Inicio" className="w-12 flex items-center justify-center">
      <Icon><path d="m0 2.300 6.500-.9v6.200H0zM7.300 1.300 16 0v7.600H7.300zM0 8.400h6.500v6.200L0 13.700zM7.300 8.400H16V16l-8.700-1.300z" fill="#fff" /></Icon>
    </button>
    <label className="w-[344px] bg-[#f2f2f2] border border-[#c8c8c8] flex items-center pl-[11px] gap-3 shrink-0">
      <Icon box="0 0 16 16"><circle cx="10" cy="6" r="5.300" stroke="#222" strokeWidth="1.200" /><path d="M6 9.500 0 15.500" stroke="#222" strokeWidth="1.300" /></Icon>
      <input aria-label="Buscar" placeholder="Escribe aquí para buscar" className="flex-1 min-w-0 text-[14px] placeholder:text-[#333]" />
    </label>
    <div className="flex ml-[3px] gap-px flex-1">
      {apps.map(app => (
        <button key={app.name} aria-label={app.name} className="relative w-12 flex items-center justify-center">
          <Icon className="w-6 h-6" box="0 0 24 24">{app.icon}</Icon>
          {app.open && <i className="absolute bottom-0 inset-x-1 h-0.5 bg-[#76b9ed]" />}
        </button>
      ))}
      <button aria-label="Blender" className="relative w-12 flex items-center justify-center bg-[#4f4960]">
        <BlenderLogo className="w-6 h-6" /><i className="absolute bottom-0 inset-x-0 h-0.5 bg-[#76b9ed]" />
      </button>
    </div>
    <div className="flex items-center shrink-0 text-[13px]">
      <span className="size-[19px] rounded-full bg-linear-to-br from-[#ffe070] to-[#f79410] mr-[10px]" />
      <span className="mr-[9px]">30°C</span><span className="mr-4">Soleado</span>
      <Icon className="w-3 h-3 mr-3" box="0 0 12 12"><path d="m.5 9 5.500-5.500L11.500 9" stroke="#fff" strokeWidth="1.300" /></Icon>
      <Icon className="w-[14px] h-4 mr-2" box="0 0 14 16"><path d="M2 4.500h7v7H2zM9.500 7l3-1.500v5L9.500 9M3 2.300C4.500.7 8 .7 9.500 2.300M3 13.700c1.500 1.600 5 1.600 6.500 0" stroke="#fff" strokeWidth="1.200" /></Icon>
      <Icon className="w-[17px] h-4 mr-[7px]" box="0 0 17 16"><path d="M5.500 4.500h10v7h-10z" stroke="#fff" /><path d="M7 6h7v4H7zM15.500 6.500h1.500v3h-1.500z" fill="#fff" /><path d="M1 3v3c0 2 4 2 4 0V3zM2 3V1M4 3V1M3 7.500V11h2.500" stroke="#fff" /></Icon>
      <Icon className="w-[18px] h-4 mr-[9px]" box="0 0 18 16"><path d="M1 6h2.500L7 2.500v11L3.500 10H1zM9.500 6c1 1 1 3 0 4M12 4.500c1.600 2 1.600 5 0 7M14.500 3c2.500 3 2.500 7 0 10" stroke="#fff" /></Icon>
      <Icon className="w-[14px] h-4 mr-3" box="0 0 14 16"><path d="M1.500 13.500C2 7.500 7 3 13 3M4.500 13.500C5 9.500 8.500 6 13 6M7.500 13.500C8 11 10 9 13 9" stroke="#ddd" /><circle cx="11.500" cy="12.300" r="1.500" fill="#fff" /></Icon>
      <span className="text-[11px] mr-4">ESP</span>
      <time className="text-[11px] leading-[18px] text-center mr-[17px]">14:17<br />15/2/2022</time>
      <Icon className="w-[17px] h-4 mr-[19px]" box="0 0 17 16"><path d="M.5 1.500h16v11h-6L8.500 15l-2-2.500h-6z" stroke="#fff" /></Icon>
      <span className="w-px h-10 bg-[#77707f] mr-1" />
    </div>
  </footer>
)

export default function App() {
  return (
    <div className="h-screen flex flex-col overflow-hidden bg-[#727272] text-black text-[11px] leading-4 font-['DejaVu_Sans_Condensed','DejaVu_Sans',sans-serif]">
      <TitleBar />
      <InfoHeader />
      <main className="flex flex-1 min-h-0">
        <div className="flex-1 min-w-0 flex flex-col">
          <Viewport />
          <ViewportHeader />
          <div className="flex h-[197px] shrink-0 border-b border-[#555]">
            <LogicEditor />
            <GameProperties />
          </div>
          <div className={`${bar} relative h-[27px] border-t border-[#808080] flex items-center pl-2 pt-0.5 shrink-0`}>
            <Corner className="left-0 bottom-0" />
            <EditorType label="Editor de lógica"><JoystickIcon /></EditorType>
            <Menus items={['Vista', 'Agregar']} className="gap-[15px] ml-[7px]" />
          </div>
        </div>
        <aside className="w-[462px] shrink-0 flex flex-col border-l border-black">
          <Outliner />
          <PropertiesEditor />
        </aside>
      </main>
      <Taskbar />
    </div>
  )
}
